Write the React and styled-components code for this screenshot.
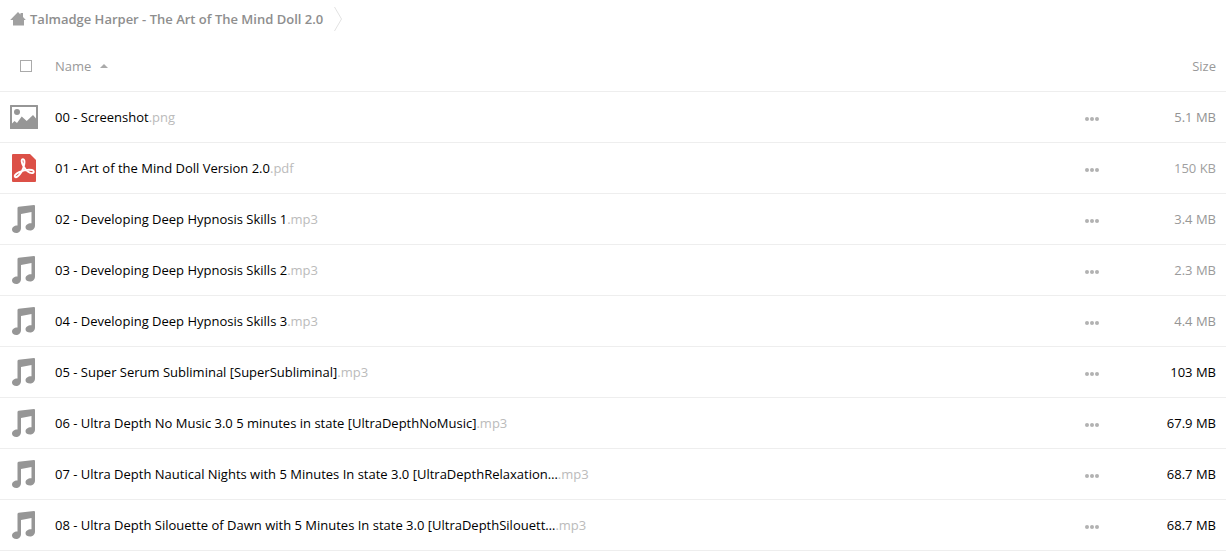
import styled, { createGlobalStyle } from 'styled-components';

const GlobalStyle = createGlobalStyle`
  * {
    box-sizing: border-box;
  }

  body {
    margin: 0;
    background: #fff;
    color: #000;
    font-family: 'Open Sans', 'Noto Sans', sans-serif;
    font-size: 13px;
    line-height: 18px;
  }
`;

const Breadcrumb = styled.nav`
  display: flex;
  align-items: center;
  height: 41px;
  padding: 0 10px 4px;
`;

const HomeLink = styled.a`
  display: flex;
  align-items: center;
  gap: 4px;
  color: #8e8e8e;
  font-weight: 600;
  text-decoration: none;
`;

const Separator = styled.svg`
  margin-left: 11px;
`;

const Table = styled.table`
  width: 100%;
  table-layout: fixed;
  border-collapse: separate;
  border-spacing: 0;
`;

const HeadCell = styled.th`
  width: ${({ $width }) => $width || 'auto'};
  height: 51px;
  padding: ${({ $right }) => ($right ? '0 10px 0 0' : '0')};
  border-bottom: 1px solid #eee;
  color: #999;
  font-weight: 400;
  text-align: ${({ $right }) => ($right ? 'right' : 'left')};
`;

const Cell = styled.td`
  height: 51px;
  padding: 0;
  border-bottom: 1px solid #eee;
`;

const SizeCell = styled(Cell)`
  padding-right: 10px;
  color: ${({ $color }) => $color};
  text-align: right;
`;

const Checkbox = styled.input`
  display: block;
  appearance: none;
  width: 12px;
  height: 12px;
  margin: 0 0 0 20px;
  border: 1px solid #aaa;
  background: #fff;
`;

const SortButton = styled.button`
  display: flex;
  align-items: center;
  gap: 9px;
  padding: 0;
  border: 0;
  background: none;
  color: inherit;
  font: inherit;
  cursor: pointer;
`;

const FileIcon = styled.svg`
  display: block;
  margin-left: 8px;
`;

const FileLink = styled.a`
  display: flex;
  color: #000;
  text-decoration: none;
  white-space: nowrap;
`;

const FileName = styled.span`
  min-width: ${({ $clipped }) => ($clipped ? '500px' : '0')};
`;

const Extension = styled.span`
  color: #bbb;
`;

const MenuButton = styled.button`
  display: block;
  height: 18px;
  padding: 0;
  border: 0;
  background: none;
  cursor: pointer;
`;

const files = [
  { name: '00 - Screenshot', ext: '.png', type: 'image', size: '5.1 MB', color: '#939393' },
  { name: '01 - Art of the Mind Doll Version 2.0', ext: '.pdf', type: 'pdf', size: '150 KB', color: '#a0a0a0' },
  { name: '02 - Developing Deep Hypnosis Skills 1', ext: '.mp3', type: 'audio', size: '3.4 MB', color: '#989898' },
  { name: '03 - Developing Deep Hypnosis Skills 2', ext: '.mp3', type: 'audio', size: '2.3 MB', color: '#9b9b9b' },
  { name: '04 - Developing Deep Hypnosis Skills 3', ext: '.mp3', type: 'audio', size: '4.4 MB', color: '#959595' },
  { name: '05 - Super Serum Subliminal [SuperSubliminal]', ext: '.mp3', type: 'audio', size: '103 MB', color: '#000' },
  { name: '06 - Ultra Depth No Music 3.0 5 minutes in state [UltraDepthNoMusic]', ext: '.mp3', type: 'audio', size: '67.9 MB', color: '#000' },
  { name: '07 - Ultra Depth Nautical Nights with 5 Minutes In state 3.0 [UltraDepthRelaxation…', ext: '.mp3', type: 'audio', size: '68.7 MB', color: '#000', clipped: true },
  { name: '08 - Ultra Depth Silouette of Dawn with 5 Minutes In state 3.0 [UltraDepthSilouett…', ext: '.mp3', type: 'audio', size: '68.7 MB', color: '#000', clipped: true },
];

const icons = {
  image: (
    <>
      <path fill="#969696" fillRule="evenodd" d="M2.500 4h27q.5 0 .5.500v23q0 .5-.5.500h-27q-.5 0-.5-.500v-23q0-.5.5-.500zM4 6v16.500L6.500 20 9 22l4.700-6.500 5 4.500 6.300-6 3 3.500V6z" />
      <circle cx="9" cy="11" r="3" fill="#969696" />
    </>
  ),
  pdf: (
    <>
      <path fill="#dc5047" d="M5 2h17l6 6v21q0 1-1 1H5q-1 0-1-1V3q0-1 1-1z" />
      <path
        fill="none"
        stroke="#fff"
        strokeWidth="1.900"
        strokeLinejoin="round"
        d="M15.200 7.200c-2.400-.4-1.700 3.800.4 7.300 2 3.300 5.200 6.400 8.200 6.600 2.600.2 2.600-2.500.1-3.100-3.400-.7-8.700.3-12.800 2.200-3.900 1.800-5.100 3.800-4 4.800 1.200 1 4-1.300 6.500-5.300 2.600-4.400 4.100-12.200 1.600-12.500z"
      />
    </>
  ),
  audio: (
    <path
      fill="#969696"
      d="M9.500 5q0-1 1-1.200L26 2q1 0 1 1v19.500c0 2.800-2 5-4.800 5-2.600 0-4.700-1.200-4.700-3.300 0-2.400 2.600-4.200 6-4V9L13 11v14c0 2.800-2 5-4.600 5C5.800 30 4 28.700 4 26.600c0-2.400 2.500-4.200 5.500-4z"
    />
  ),
};

function FileRow({ name, ext, type, size, color, clipped }) {
  return (
    <tr>
      <Cell>
        <FileIcon width="32" height="32" viewBox="0 0 32 32" aria-hidden="true">
          {icons[type]}
        </FileIcon>
      </Cell>
      <Cell>
        <FileLink href="#">
          <FileName $clipped={clipped}>{name}</FileName>
          <Extension>{ext}</Extension>
        </FileLink>
      </Cell>
      <Cell>
        <MenuButton type="button" aria-label="Actions">
          <svg width="16" height="18" viewBox="0 0 16 18" fill="#b2b2b2">
            <circle cx="3" cy="11" r="2" />
            <circle cx="8" cy="11" r="2" />
            <circle cx="13" cy="11" r="2" />
          </svg>
        </MenuButton>
      </Cell>
      <SizeCell $color={color}>{size}</SizeCell>
    </tr>
  );
}

export default function App() {
  return (
    <>
      <GlobalStyle />
      <Breadcrumb>
        <HomeLink href="#">
          <svg width="16" height="16" viewBox="0 0 16 16" fill="#a0a0a0" aria-hidden="true">
            <path d="M8 1 10.500 3.500V2H13v4l2.800 3H14v5.500H3V9H.2z" />
          </svg>
          Talmadge Harper - The Art of The Mind Doll 2.0
        </HomeLink>
        <Separator width="9" height="26" viewBox="0 0 9 26" fill="none" stroke="#e2e2e2" aria-hidden="true">
          <path d="M.500 1 7.500 13 .500 25" />
        </Separator>
      </Breadcrumb>
      <Table>
        <thead>
          <tr>
            <HeadCell $width="55px">
              <Checkbox type="checkbox" aria-label="Select all" />
            </HeadCell>
            <HeadCell>
              <SortButton type="button">
                Name
                <svg width="8" height="4" viewBox="0 0 8 4" fill="#aaa" aria-hidden="true">
                  <path d="M0 4 4 0l4 4z" />
                </svg>
              </SortButton>
            </HeadCell>
            <HeadCell $width="52px" />
            <HeadCell $width="90px" $right>
              Size
            </HeadCell>
          </tr>
        </thead>
        <tbody>
          {files.map((file) => (
            <FileRow key={file.name} {...file} />
          ))}
        </tbody>
      </Table>
    </>
  );
}
